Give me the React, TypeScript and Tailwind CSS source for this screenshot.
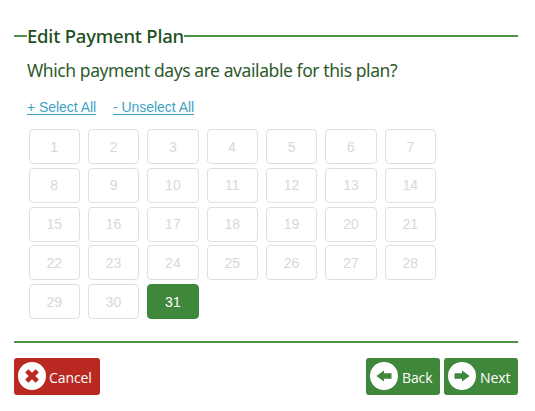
import { useState } from 'react';
import clsx from 'clsx';

const DAYS = Array.from({ length: 31 }, (_, i) => i + 1);

function XIcon() {
  return (
    <svg className="w-[14px] h-[14px]" viewBox="0 0 14 14" fill="#b92922">
      <path d="M3.4 0.4 7 4 10.6 0.4 13.6 3.4 10 7 13.6 10.6 10.6 13.6 7 10 3.4 13.6 0.4 10.6 4 7 0.4 3.4Z" stroke="#b92922" strokeWidth="0.5" strokeLinejoin="round" />
    </svg>
  );
}

function ArrowIcon({ flip = false }: { flip?: boolean }) {
  return (
    <svg className={clsx('w-[16px] h-[12px]', flip && '-scale-x-100')} viewBox="0 0 16 12" fill="#3f873b">
      <path d="M0.5 3.2H8V0.4L15.6 6 8 11.6V8.8H0.5Z" />
    </svg>
  );
}

export default function App() {
  const [selected, setSelected] = useState<number[]>([31]);

  const toggleDay = (day: number) => {
    setSelected((prev) => (prev.includes(day) ? prev.filter((d) => d !== day) : [...prev, day]));
  };

  return (
    <div className="w-[535px] h-[411px] bg-white overflow-hidden pl-[14px] pr-[17px] pt-[22px]">
      {/* Title with rule on both sides */}
      <div className="flex items-center h-7">
        <div className="w-[13px] h-[2px] bg-[#4c9348]" />
        <h1 className="w-[157px] whitespace-nowrap font-['Noto_Sans'] font-medium text-[18.5px] leading-7 tracking-[-0.2px] text-[#1f4f1f]">
          Edit Payment Plan
        </h1>
        <div className="flex-1 h-[2px] bg-[#4c9348]" />
      </div>

      <div className="pl-[13px]">
        <p className="mt-[6px] h-7 whitespace-nowrap font-['Noto_Sans'] font-normal text-[17.5px] leading-7 tracking-[-0.42px] text-[#2c5a2c]">
          Which payment days are available for this plan?
        </p>

        <div className="mt-[13px] flex h-5 gap-[17px] whitespace-nowrap font-['Liberation_Sans'] text-[14px] leading-5 tracking-[-0.05px] text-[#419fc4]">
          <button className="underline underline-offset-2" onClick={() => setSelected(DAYS)}>+ Select All</button>
          <button className="underline underline-offset-2" onClick={() => setSelected([])}>- Unselect All</button>
        </div>

        <div className="mt-[12px] ml-[1.5px] grid w-[407.5px] grid-cols-7 gap-x-[8px] gap-y-[3.8px]">
          {DAYS.map((day) => (
            <button
              key={day}
              onClick={() => toggleDay(day)}
              className={clsx(
                "h-[35px] rounded-[4px] border pt-px font-['Liberation_Sans'] text-[14px]",
                selected.includes(day)
                  ? 'border-[#3f873b] bg-[#3f873b] text-white'
                  : 'border-[#dfdfdf] bg-white text-[#d8d8d8]'
              )}
            >
              {day}
            </button>
          ))}
        </div>
      </div>

      <div className="mt-[22px] h-[2px] bg-[#4c9348]" />

      <div className="mt-[15px] flex h-[37px] gap-1 font-['Open_Sans'] text-[14px] tracking-[-0.1px] text-white">
        <button className="mr-auto flex w-[86px] items-center rounded-[3px] bg-[#b92922] pb-px pl-[4px]">
          <span className="flex size-[28px] items-center justify-center rounded-full bg-white">
            <XIcon />
          </span>
          <span className="ml-[3px] pt-[3px]">Cancel</span>
        </button>
        <button className="flex w-[74px] items-center rounded-[3px] bg-[#3f873b] pb-px pl-[4px]">
          <span className="flex size-[28px] items-center justify-center rounded-full bg-white">
            <ArrowIcon flip />
          </span>
          <span className="ml-[4px] pt-[3px]">Back</span>
        </button>
        <button className="flex w-[74px] items-center rounded-[3px] bg-[#3f873b] pb-px pl-[4px]">
          <span className="flex size-[28px] items-center justify-center rounded-full bg-white">
            <ArrowIcon />
          </span>
          <span className="ml-[4px] pt-[3px]">Next</span>
        </button>
      </div>
    </div>
  );
}
